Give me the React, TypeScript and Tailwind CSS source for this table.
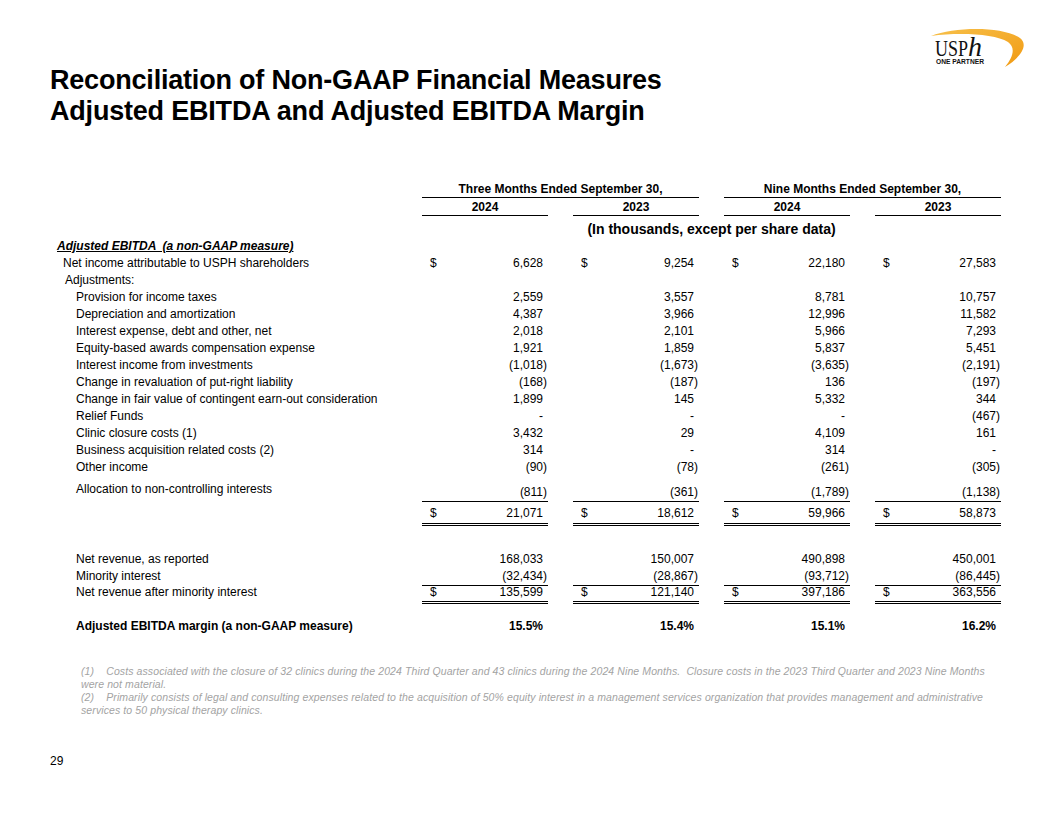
const G = "grid grid-cols-[347px_126px_126px_126px_126px] gap-x-[25px]";

type Line = [string, string, string, string, string];

const adjustments: Line[] = [
  ["Provision for income taxes", "2,559", "3,557", "8,781", "10,757"],
  ["Depreciation and amortization", "4,387", "3,966", "12,996", "11,582"],
  ["Interest expense, debt and other, net", "2,018", "2,101", "5,966", "7,293"],
  ["Equity-based awards compensation expense", "1,921", "1,859", "5,837", "5,451"],
  ["Interest income from investments", "(1,018)", "(1,673)", "(3,635)", "(2,191)"],
  ["Change in revaluation of put-right liability", "(168)", "(187)", "136", "(197)"],
  ["Change in fair value of contingent earn-out consideration", "1,899", "145", "5,332", "344"],
  ["Relief Funds", "-", "-", "-", "(467)"],
  ["Clinic closure costs (1)", "3,432", "29", "4,109", "161"],
  ["Business acquisition related costs (2)", "314", "-", "314", "-"],
  ["Other income", "(90)", "(78)", "(261)", "(305)"],
];

const Num = ({ v }: { v: string }) => {
  const neg = v.startsWith("(");
  return (
    <span>
      {v}
      {!neg && <span className="invisible">)</span>}
    </span>
  );
};

const Cell = ({ v, dollar, className = "" }: { v: string; dollar?: boolean; className?: string }) => (
  <div className={"flex justify-between pl-[8px] pr-[1px] " + className}>
    <span>{dollar ? "$" : ""}</span>
    <Num v={v} />
  </div>
);

const Logo = () => (
  <svg width="100" height="45" viewBox="0 0 100 45">
    <defs>
      <linearGradient id="sw" x1="0" y1="0" x2="1" y2="1">
        <stop offset="0" stopColor="#f7c04a" />
        <stop offset="1" stopColor="#f19a12" />
      </linearGradient>
    </defs>
    <path
      d="M6 8 C30 -1, 76 -2, 95 10 C103 16, 98 28, 80 39 C88 29, 91 20, 83 14 C70 6, 35 4, 6 8 Z"
      fill="url(#sw)"
    />
    <text
      x="10"
      y="28"
      fontFamily="'Liberation Serif', 'Times New Roman', serif"
      fontSize="23"
      textLength="33"
      lengthAdjust="spacingAndGlyphs"
      fill="#111"
    >
      USP
    </text>
    <text
      x="43"
      y="28"
      fontFamily="'Liberation Serif', 'Times New Roman', serif"
      fontStyle="italic"
      fontSize="28"
      fill="#111"
    >
      h
    </text>
    <text
      x="11"
      y="36"
      fontFamily="'Liberation Sans', Arial, sans-serif"
      fontWeight="bold"
      fontSize="6.5"
      textLength="48"
      lengthAdjust="spacingAndGlyphs"
      fill="#111"
    >
      ONE PARTNER
    </text>
  </svg>
);

export default function App() {
  return (
    <div className="w-[1056px] h-[816px] bg-white text-black font-['Liberation_Sans',Arial,sans-serif] flex flex-col">
      <div className="flex justify-between items-start pt-[28px] pl-[50px] pr-[31px]">
        <h1 className="mt-[37px] text-[27px] leading-[31px] font-bold tracking-[-0.2px]">
          Reconciliation of Non-GAAP Financial Measures
          <br />
          Adjusted EBITDA and Adjusted EBITDA Margin
        </h1>
        <Logo />
      </div>

      <div className="pl-[50px] mt-[54px] text-[12px]">
        <div className={G + " h-[17px]"}>
          <div />
          <div className="col-span-2 border-b border-black text-center font-bold leading-[16px]">
            Three Months Ended September 30,
          </div>
          <div className="col-span-2 border-b border-black text-center font-bold leading-[16px]">
            Nine Months Ended September 30,
          </div>
        </div>
        <div className={G + " h-[18px]"}>
          <div />
          {["2024", "2023", "2024", "2023"].map((y, i) => (
            <div key={i} className="border-b border-black text-center font-bold pt-[2px] leading-[15px]">
              {y}
            </div>
          ))}
        </div>
        <div className={G + " h-[22px]"}>
          <div />
          <div className="col-span-4 text-center font-bold text-[14px] pt-[5px] leading-[16px]">
            (In thousands, except per share data)
          </div>
        </div>

        <div className="leading-[17px]">
          <div className={G + " h-[17px]"}>
            <div className="pl-[7px] font-bold italic underline whitespace-pre">
              Adjusted EBITDA  (a non-GAAP measure)
            </div>
          </div>
          <div className={G + " h-[17px]"}>
            <div className="pl-[13px]">Net income attributable to USPH shareholders</div>
            <Cell v="6,628" dollar />
            <Cell v="9,254" dollar />
            <Cell v="22,180" dollar />
            <Cell v="27,583" dollar />
          </div>
          <div className={G + " h-[17px]"}>
            <div className="pl-[15px]">Adjustments:</div>
          </div>
          {adjustments.map((r) => (
            <div key={r[0]} className={G + " h-[17px]"}>
              <div className="pl-[26px]">{r[0]}</div>
              <Cell v={r[1]} />
              <Cell v={r[2]} />
              <Cell v={r[3]} />
              <Cell v={r[4]} />
            </div>
          ))}
          <div className={G + " h-[26px]"}>
            <div className="pl-[26px] pt-[5px]">Allocation to non-controlling interests</div>
            {["(811)", "(361)", "(1,789)", "(1,138)"].map((v, i) => (
              <Cell key={i} v={v} className="items-end border-b border-black" />
            ))}
          </div>
          <div className={G + " h-[24px]"}>
            <div />
            {["21,071", "18,612", "59,966", "58,873"].map((v, i) => (
              <Cell key={i} v={v} dollar className="pt-[3px] border-b-[3px] border-double border-black" />
            ))}
          </div>

          <div className="h-[25px]" />

          <div className={G + " h-[17px]"}>
            <div className="pl-[26px]">Net revenue, as reported</div>
            {["168,033", "150,007", "490,898", "450,001"].map((v, i) => (
              <Cell key={i} v={v} />
            ))}
          </div>
          <div className={G + " h-[18px]"}>
            <div className="pl-[26px]">Minority interest</div>
            {["(32,434)", "(28,867)", "(93,712)", "(86,445)"].map((v, i) => (
              <Cell key={i} v={v} className="border-b border-black" />
            ))}
          </div>
          <div className={G + " h-[18px]"}>
            <div className="pl-[26px] leading-[13px]">Net revenue after minority interest</div>
            {["135,599", "121,140", "397,186", "363,556"].map((v, i) => (
              <Cell key={i} v={v} dollar className="leading-[13px] border-b-[3px] border-double border-black" />
            ))}
          </div>
          <div className={G + " pt-[14px] font-bold"}>
            <div className="pl-[26px]">Adjusted EBITDA margin (a non-GAAP measure)</div>
            {["15.5%", "15.4%", "15.1%", "16.2%"].map((v, i) => (
              <Cell key={i} v={v} />
            ))}
          </div>
        </div>
      </div>

      <div className="pl-[81px] mt-[30px] text-[10.5px] leading-[13px] tracking-[0.1px] italic text-[#a3a3a3] whitespace-pre">
        <p>
          (1)    Costs associated with the closure of 32 clinics during the 2024 Third Quarter and 43 clinics during the 2024 Nine Months.  Closure costs in the 2023 Third Quarter and 2023 Nine Months
          <br />
          were not material.
        </p>
        <p>
          (2)    Primarily consists of legal and consulting expenses related to the acquisition of 50% equity interest in a management services organization that provides management and administrative
          <br />
          services to 50 physical therapy clinics.
        </p>
      </div>

      <div className="pl-[50px] mt-[37px] text-[12px] leading-[15px]">29</div>
    </div>
  );
}
